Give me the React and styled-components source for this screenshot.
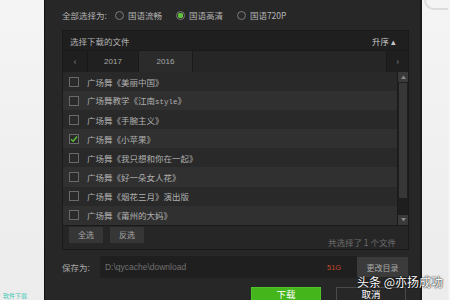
import React from 'react';
import styled, { createGlobalStyle } from 'styled-components';

const GlobalStyle = createGlobalStyle`
  html, body {
    margin: 0;
    padding: 0;
    width: 450px;
    height: 300px;
    overflow: hidden;
    background: #f3f3f3;
    font-family: "Noto Sans CJK SC", "Liberation Sans", sans-serif;
  }
`;

const Page = styled.div`
  display: flex;
  width: 450px;
  height: 300px;
  overflow: hidden;
  position: relative;
`;

const SideStrip = styled.div`
  width: ${(p) => p.$w}px;
  flex-shrink: 0;
  background: linear-gradient(180deg, #f4f4f4 0%, #ececec 100%);
  display: flex;
  flex-direction: column;
  justify-content: ${(p) => (p.$end ? 'flex-end' : 'flex-start')};
  overflow: hidden;
`;

const TealScrap = styled.div`
  font-size: 6px;
  line-height: 7px;
  color: #3cc9b4;
  white-space: nowrap;
  padding: 0 0 1px 3px;
`;

const TopBlob = styled.div`
  width: 30px;
  height: 10px;
  margin: -2px 0 0 2px;
  border: 2px solid #dcdcdc;
  border-top: none;
  border-radius: 0 0 10px 10px;
`;

const Dialog = styled.div`
  width: 378px;
  height: 300px;
  flex-shrink: 0;
  background: #272727;
  border-left: 1px solid #111;
  border-right: 2px solid #1b1b1b;
  padding: 0 12px 0 17px;
  box-sizing: border-box;
  display: flex;
  flex-direction: column;
  & > * {
    flex-shrink: 0;
  }
`;

const OptionRow = styled.div`
  height: 30px;
  display: flex;
  align-items: center;
  font-size: 8.5px;
  color: #b4b4b4;
`;

const Label = styled.span`
  margin-right: 8px;
`;

const Radio = styled.span`
  display: inline-flex;
  align-items: center;
  gap: 4px;
  margin-right: 14px;
  &::before {
    content: '';
    width: 7px;
    height: 7px;
    border-radius: 50%;
    border: 1px solid #7a7a7a;
    box-sizing: content-box;
    background: ${(p) =>
      p.$on ? 'radial-gradient(circle, #5fc13a 0 2.5px, #2a2a2a 3px)' : '#2a2a2a'};
  }
`;

const Panel = styled.div`
  width: 347px;
  height: 220px;
  border: 1px solid #1a1a1a;
  box-sizing: border-box;
  background: #262626;
  display: flex;
  flex-direction: column;
  & > * {
    flex-shrink: 0;
  }
`;

const PanelHeader = styled.div`
  height: 19px;
  background: #1f1f1f;
  display: flex;
  align-items: center;
  justify-content: space-between;
  padding: 0 12px 0 7px;
  font-size: 8.5px;
  color: #b4b4b4;
  border-bottom: 1px solid #1a1a1a;
`;

const SortLabel = styled.span`
  color: #c8c8c8;
`;

const TabRow = styled.div`
  height: 21px;
  display: flex;
  background: #262626;
`;

const ArrowCell = styled.div`
  width: ${(p) => p.$w}px;
  display: flex;
  align-items: center;
  justify-content: center;
  background: #1f1f1f;
  color: #8a8a8a;
  font-size: 9px;
  border-${(p) => (p.$right ? 'left' : 'right')}: 1px solid #181818;
`;

const Tab = styled.div`
  width: ${(p) => p.$w}px;
  display: flex;
  align-items: center;
  justify-content: center;
  font-family: "Liberation Sans", sans-serif;
  font-size: 8px;
  color: #a8a8a8;
  background: ${(p) => (p.$active ? '#2b2b2b' : '#202020')};
  border-right: 1px solid #1a1a1a;
`;

const TabFill = styled.div`
  flex: 1;
  background: #262626;
`;

const ListArea = styled.div`
  height: 153px;
  display: flex;
  border-bottom: 1px solid #1a1a1a;
`;

const Rows = styled.div`
  flex: 1;
  display: flex;
  flex-direction: column;
`;

const Row = styled.div`
  height: 19.1px;
  display: flex;
  align-items: center;
  padding-left: 6px;
  background: ${(p) => (p.$odd ? '#303030' : '#292929')};
  font-size: 8.5px;
  color: #b0b0b0;
  white-space: nowrap;
`;

const Name = styled.span`
  line-height: 12px;
`;

const Check = styled.span`
  width: 8px;
  height: 8px;
  border: 1px solid #6a6a6a;
  margin-right: 8px;
  display: flex;
  align-items: center;
  justify-content: center;
  background: #2a2a2a;
`;

const Latin = styled.span`
  font-family: "Liberation Mono", monospace;
  font-size: 7.5px;
`;

const ScrollBar = styled.div`
  width: 10px;
  flex-shrink: 0;
  background: #1e1e1e;
  display: flex;
  flex-direction: column;
  border-left: 1px solid #1a1a1a;
`;

const ScrollBtn = styled.div`
  height: 10px;
  background: #3a3a3a;
  display: flex;
  align-items: center;
  justify-content: center;
`;

const Thumb = styled.div`
  flex: 1;
  margin: 1px 1px;
  background: #373737;
`;

const Track = styled.div`
  height: 16px;
`;

const PanelFooter = styled.div`
  flex: 1;
  display: flex;
  align-items: center;
  padding: 0 12px 0 6px;
  gap: 7px;
  font-size: 8.5px;
  color: #6e6e6e;
`;

const SmallBtn = styled.div`
  width: 34px;
  height: 16px;
  background: #363636;
  display: flex;
  align-items: center;
  justify-content: center;
  color: #a8a8a8;
  font-size: 8px;
  margin-top: -6px;
`;

const Count = styled.span`
  margin-left: auto;
  margin-top: 8px;
`;

const SaveRow = styled.div`
  margin-top: 6px;
  height: 22px;
  display: flex;
  align-items: center;
  font-size: 8.5px;
  color: #a8a8a8;
`;

const SaveLabel = styled.span`
  width: 38px;
`;

const PathBox = styled.div`
  width: 258px;
  height: 22px;
  background: #1f1f1f;
  display: flex;
  align-items: center;
  padding: 0 16px 0 5px;
  box-sizing: border-box;
  font-family: "Liberation Sans", sans-serif;
  color: #707070;
  font-size: 8.5px;
`;

const Size = styled.span`
  margin-left: auto;
  color: #c2482c;
  font-size: 7.5px;
`;

const ChangeBtn = styled.div`
  width: 51px;
  height: 20px;
  background: #3b3b3b;
  display: flex;
  align-items: center;
  justify-content: center;
  color: #a8a8a8;
  font-size: 8px;
`;

const ActionRow = styled.div`
  margin-top: 9px;
  display: flex;
  justify-content: flex-end;
  gap: 15px;
  padding-right: 2px;
`;

const ActionBtn = styled.div`
  width: 70px;
  height: 13px;
  box-sizing: border-box;
  display: flex;
  justify-content: center;
  padding-top: 1px;
  font-size: 9.5px;
  line-height: 10px;
  color: #fff;
  background: ${(p) => (p.$primary ? '#45b51c' : 'transparent')};
  border: 1px solid ${(p) => (p.$primary ? '#4fc426' : '#4a4a4a')};
  border-bottom: none;
`;

const Watermark = styled.div`
  position: absolute;
  left: 357px;
  top: 275px;
  font-size: 12px;
  line-height: 13px;
  color: #fff;
  white-space: nowrap;
  text-shadow: 0 0 2px rgba(0, 0, 0, 0.8), 0 0 1px #000;
`;

const files = [
  ['广场舞《美丽中国》'],
  ['广场舞教学《江南', 'style', '》'],
  ['广场舞《手腕主义》'],
  ['广场舞《小苹果》', null, null, true],
  ['广场舞《我只想和你在一起》'],
  ['广场舞《好一朵女人花》'],
  ['广场舞《烟花三月》演出版'],
  ['广场舞《莆州的大妈》'],
];

const Tick = () => (
  <svg width="8" height="8" viewBox="0 0 8 8">
    <path d="M1 4.2 L3.2 6.2 L7 1.5" stroke="#5fc13a" strokeWidth="1.4" fill="none" />
  </svg>
);

const Caret = ({ up }) => (
  <svg width="5" height="4" viewBox="0 0 5 4">
    <path d={up ? 'M0 4 L2.5 0.5 L5 4Z' : 'M0 0 L2.5 3.5 L5 0Z'} fill="#8a8a8a" />
  </svg>
);

export default function App() {
  return (
    <>
      <GlobalStyle />
      <Page>
        <SideStrip $w={44} $end>
          <TealScrap>软件下载</TealScrap>
        </SideStrip>
        <Dialog>
          <OptionRow>
            <Label>全部选择为:</Label>
            <Radio>国语流畅</Radio>
            <Radio $on>国语高清</Radio>
            <Radio>国语720P</Radio>
          </OptionRow>
          <Panel>
            <PanelHeader>
              <span>选择下载的文件</span>
              <SortLabel>升序 ▴</SortLabel>
            </PanelHeader>
            <TabRow>
              <ArrowCell $w={24}>‹</ArrowCell>
              <Tab $w={50}>2017</Tab>
              <Tab $w={53} $active>2016</Tab>
              <TabFill />
              <ArrowCell $w={21} $right>›</ArrowCell>
            </TabRow>
            <ListArea>
              <Rows>
                {files.map(([name, latin, tail, checked], i) => (
                  <Row key={i} $odd={i % 2 === 1}>
                    <Check>{checked && <Tick />}</Check>
                    <Name>
                      {name}
                      {latin && <Latin>{latin}</Latin>}
                      {tail}
                    </Name>
                  </Row>
                ))}
              </Rows>
              <ScrollBar>
                <ScrollBtn><Caret up /></ScrollBtn>
                <Thumb />
                <Track />
                <ScrollBtn><Caret /></ScrollBtn>
              </ScrollBar>
            </ListArea>
            <PanelFooter>
              <SmallBtn>全选</SmallBtn>
              <SmallBtn>反选</SmallBtn>
              <Count>共选择了 1 个文件</Count>
            </PanelFooter>
          </Panel>
          <SaveRow>
            <SaveLabel>保存为:</SaveLabel>
            <PathBox>
              D:\qycache\download
              <Size>51G</Size>
            </PathBox>
            <ChangeBtn>更改目录</ChangeBtn>
          </SaveRow>
          <ActionRow>
            <ActionBtn $primary>下载</ActionBtn>
            <ActionBtn>取消</ActionBtn>
          </ActionRow>
        </Dialog>
        <SideStrip $w={26}>
          <TopBlob />
        </SideStrip>
        <Watermark>头条 @亦扬成功</Watermark>
      </Page>
    </>
  );
}
